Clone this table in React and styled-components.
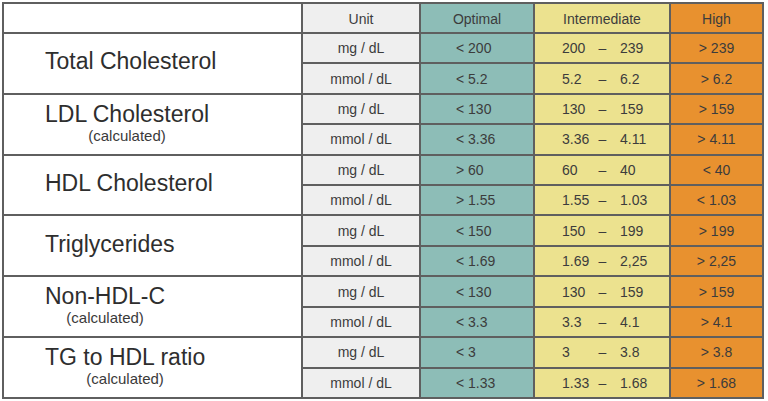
import React from "react";
import styled, { createGlobalStyle } from "styled-components";

const GlobalStyle = createGlobalStyle`
  html, body {
    margin: 0;
    padding: 0;
    background: #ffffff;
  }
  body {
    font-family: "Liberation Sans", Arial, sans-serif;
    color: #3a3a3a;
  }
`;

const Page = styled.div`
  padding: 2px 0 0 2px;
`;

const Table = styled.div`
  display: grid;
  grid-template-columns: 297px 116px 112px 134px 91px;
  grid-template-rows: 28px repeat(12, 1fr);
  gap: 2px;
  padding: 2px;
  width: 762px;
  height: 397px;
  box-sizing: border-box;
  background: #5f5f5f;
`;

const tones = {
  blank: "#ffffff",
  unit: "#efefef",
  optimal: "#8dbdb7",
  intermediate: "#ece28f",
  high: "#e8912f",
};

const Cell = styled.div`
  background: ${(p) => tones[p.$tone]};
  display: flex;
  align-items: center;
  justify-content: ${(p) => (p.$left ? "flex-start" : "center")};
  padding-left: ${(p) => p.$pad || 0}px;
  font-size: 14px;
  color: #3c3c3c;
  white-space: nowrap;
  box-sizing: border-box;
`;

const HeadCell = styled(Cell)`
  font-size: 14px;
  padding-top: 1px;
`;

const LabelCell = styled.div`
  grid-row: span 2;
  background: #ffffff;
  display: flex;
  align-items: center;
  padding-left: 41px;
  padding-bottom: 3px;
`;

const LabelBlock = styled.div`
  display: inline-flex;
  flex-direction: column;
  align-items: center;
`;

const LabelTitle = styled.div`
  font-size: 23px;
  line-height: 25px;
  color: #2e2e2e;
`;

const LabelNote = styled.div`
  font-size: 15px;
  line-height: 17px;
  color: #3a3a3a;
`;

const RangeCell = styled(Cell)`
  display: grid;
  grid-template-columns: 23px 35px auto;
  justify-content: start;
  align-items: center;
  padding-left: 27px;
`;

const Dash = styled.span`
  text-align: center;
`;

const groups = [
  {
    name: "Total Cholesterol",
    rows: [
      ["mg / dL", "< 200", "200", "239", "> 239"],
      ["mmol / dL", "< 5.2", "5.2", "6.2", "> 6.2"],
    ],
  },
  {
    name: "LDL Cholesterol",
    note: true,
    rows: [
      ["mg / dL", "< 130", "130", "159", "> 159"],
      ["mmol / dL", "< 3.36", "3.36", "4.11", "> 4.11"],
    ],
  },
  {
    name: "HDL Cholesterol",
    rows: [
      ["mg / dL", "> 60", "60", "40", "< 40"],
      ["mmol / dL", "> 1.55", "1.55", "1.03", "< 1.03"],
    ],
  },
  {
    name: "Triglycerides",
    rows: [
      ["mg / dL", "< 150", "150", "199", "> 199"],
      ["mmol / dL", "< 1.69", "1.69", "2,25", "> 2,25"],
    ],
  },
  {
    name: "Non-HDL-C",
    note: true,
    rows: [
      ["mg / dL", "< 130", "130", "159", "> 159"],
      ["mmol / dL", "< 3.3", "3.3", "4.1", "> 4.1"],
    ],
  },
  {
    name: "TG to HDL ratio",
    note: true,
    rows: [
      ["mg / dL", "< 3", "3", "3.8", "> 3.8"],
      ["mmol / dL", "< 1.33", "1.33", "1.68", "> 1.68"],
    ],
  },
];

const App = () => {
  return (
    <Page>
      <GlobalStyle />
      <Table>
        <HeadCell $tone="blank" />
        <HeadCell $tone="unit">Unit</HeadCell>
        <HeadCell $tone="optimal">Optimal</HeadCell>
        <HeadCell $tone="intermediate">Intermediate</HeadCell>
        <HeadCell $tone="high">High</HeadCell>

        {groups.map((g) =>
          g.rows.map((r, i) => (
            <React.Fragment key={g.name + i}>
              {i === 0 && (
                <LabelCell>
                  <LabelBlock>
                    <LabelTitle>{g.name}</LabelTitle>
                    {g.note && <LabelNote>(calculated)</LabelNote>}
                  </LabelBlock>
                </LabelCell>
              )}
              <Cell $tone="unit">{r[0]}</Cell>
              <Cell $tone="optimal" $left $pad={35}>
                {r[1]}
              </Cell>
              <RangeCell $tone="intermediate">
                <span>{r[2]}</span>
                <Dash>–</Dash>
                <span>{r[3]}</span>
              </RangeCell>
              <Cell $tone="high">{r[4]}</Cell>
            </React.Fragment>
          ))
        )}
      </Table>
    </Page>
  );
};

export default App;
